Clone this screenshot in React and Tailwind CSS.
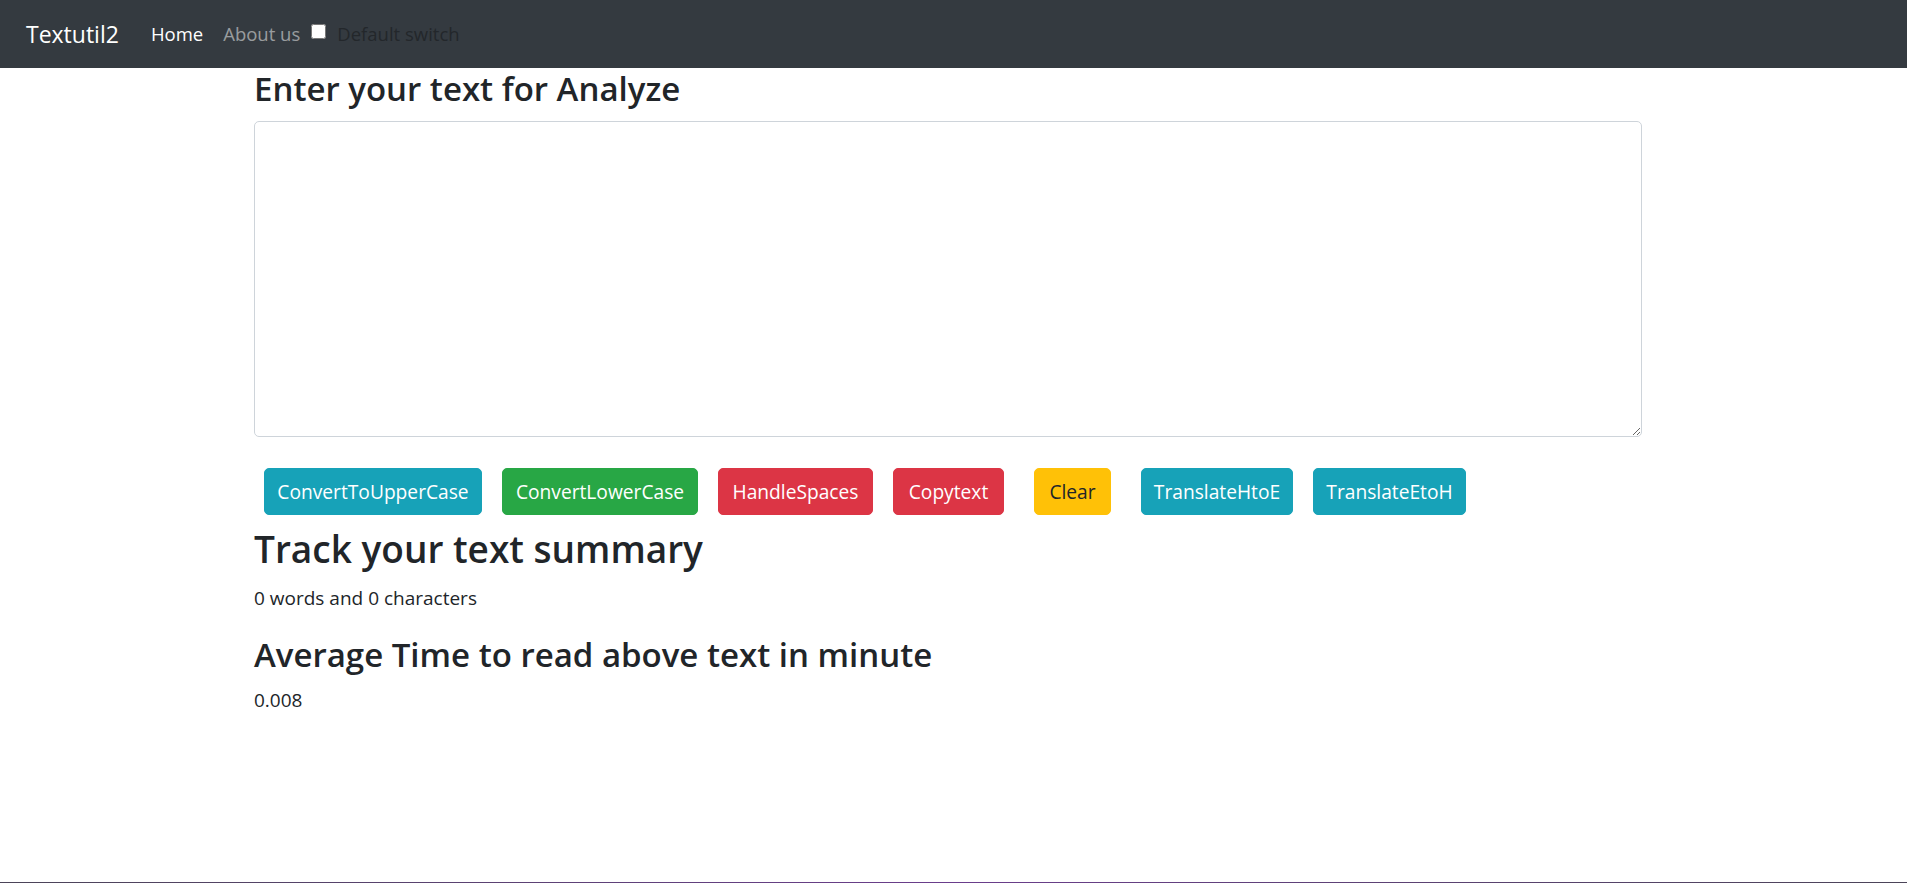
import React, { useState } from "react";

const buttons = [
  { label: "ConvertToUpperCase", cls: "w-[218px] ml-[10px] bg-[#17a2b8] border-[#17a2b8] text-white" },
  { label: "ConvertLowerCase", cls: "w-[196px] ml-[20px] bg-[#28a745] border-[#28a745] text-white" },
  { label: "HandleSpaces", cls: "w-[155px] ml-[20px] bg-[#dc3545] border-[#dc3545] text-white" },
  { label: "Copytext", cls: "w-[111px] ml-[20px] bg-[#dc3545] border-[#dc3545] text-white" },
  { label: "Clear", cls: "w-[77px] ml-[30px] bg-[#ffc107] border-[#ffc107] text-[#212529]" },
  { label: "TranslateHtoE", cls: "w-[152px] ml-[30px] bg-[#17a2b8] border-[#17a2b8] text-white" },
  { label: "TranslateEtoH", cls: "w-[153px] ml-[20px] bg-[#17a2b8] border-[#17a2b8] text-white" },
];

export default function App() {
  const [text, setText] = useState("");

  const words = text.split(/\s+/).filter((w) => w.length !== 0).length;
  const minutes = words ? 0.008 * words : 0.008;

  return (
    <div className="min-h-screen flex flex-col bg-white text-[#212529] font-['Open_Sans','Noto_Sans',sans-serif]">
      {/* navbar */}
      <nav className="h-[68px] shrink-0 bg-[#343a40] flex items-center pl-[26px]">
        <a href="#" className="text-[23px] leading-none text-white">
          Textutil2
        </a>
        <a href="#" className="ml-[32px] text-[18.5px] leading-none text-white">
          Home
        </a>
        <a href="#" className="ml-[20px] text-[18.5px] leading-none text-white/50">
          About us
        </a>
        <input type="checkbox" className="ml-[11px] w-[15px] h-[15px] -mt-[6px]" />
        <label className="ml-[11px] text-[18.5px] leading-none text-[#23272b]">
          Default switch
        </label>
      </nav>

      <main className="flex-1 pl-[254px]">
        <h1 className="mt-[1px] text-[33px] leading-[40px] font-semibold">
          Enter your text for Analyze
        </h1>
        <textarea
          value={text}
          onChange={(e) => setText(e.target.value)}
          className="block mt-[12px] w-[1388px] h-[316px] border border-[#ced4da] rounded-[5px] px-[14px] py-[7px] text-[19.2px] outline-none"
        />

        <div className="flex mt-[31px]">
          {buttons.map((b) => (
            <button
              key={b.label}
              className={`h-[47px] shrink-0 rounded-[5px] border text-[19.2px] leading-none ${b.cls}`}
            >
              {b.label}
            </button>
          ))}
        </div>

        <h2 className="mt-[11px] text-[37px] leading-[46px] font-semibold">
          Track your text summary
        </h2>
        <p className="mt-[12px] text-[19px] leading-[29px]">
          {words} words and {text.length} characters
        </p>
        <h2 className="mt-[22px] text-[33px] leading-[40px] font-semibold">
          Average Time to read above text in minute
        </h2>
        <p className="mt-[11px] text-[19px] leading-[29px]">
          {Number(minutes.toFixed(3))}
        </p>
      </main>

      <div className="h-px shrink-0 bg-gradient-to-r from-[#4b4458] via-[#6a3d8c] to-[#4b4458]" />
    </div>
  );
}
